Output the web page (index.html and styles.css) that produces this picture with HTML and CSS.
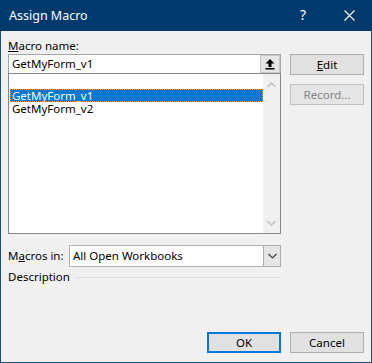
FILE: index.html
```html
<!DOCTYPE html>
<html>
<head>
<meta charset="utf-8">
<link rel="stylesheet" href="styles.css">
</head>
<body>
<div class="window">
  <div class="titlebar">
    <div class="title">Assign Macro</div>
    <div class="capbtn help">?</div>
    <div class="capbtn close">
      <svg width="11" height="11" viewBox="0 0 11 11"><path d="M0.5 0.5 L10.5 10.5 M10.5 0.5 L0.5 10.5" stroke="#fff" stroke-width="1.1" fill="none"/></svg>
    </div>
  </div>
  <div class="content">
    <div class="leftcol">
      <div class="label"><u>M</u>acro name:</div>
      <div class="namebox">
        <div class="nametext">GetMyForm_v1</div>
        <div class="upbtn">
          <svg width="10" height="11" viewBox="0 0 10 11"><path d="M5 0 L9.5 4.5 L6.5 4.5 L6.5 8 L3.5 8 L3.5 4.5 L0.5 4.5 Z" fill="#000"/><rect x="0.5" y="9" width="9" height="1.5" fill="#000"/></svg>
        </div>
      </div>
      <div class="list">
        <div class="items">
          <div class="item selected">GetMyForm_v1</div>
          <div class="item">GetMyForm_v2</div>
        </div>
        <div class="scrollbar">
          <svg width="9" height="6" viewBox="0 0 9 6"><path d="M0.5 5 L4.5 1 L8.5 5" stroke="#c2c2c2" stroke-width="1.6" fill="none"/></svg>
          <svg width="9" height="6" viewBox="0 0 9 6"><path d="M0.5 1 L4.5 5 L8.5 1" stroke="#c2c2c2" stroke-width="1.6" fill="none"/></svg>
        </div>
      </div>
      <div class="macrosin">
        <div class="label inl">M<u>a</u>cros in:</div>
        <div class="select">
          <div class="seltext">All Open Workbooks</div>
          <div class="selbtn">
            <svg width="9" height="6" viewBox="0 0 9 6"><path d="M0.5 1 L4.5 5 L8.5 1" stroke="#404040" stroke-width="1.2" fill="none"/></svg>
          </div>
        </div>
      </div>
      <div class="descrow">
        <div class="label inl">Description</div>
        <div class="rule"></div>
      </div>
    </div>
    <div class="rightcol">
      <div class="btn"><u>E</u>dit</div>
      <div class="btn disabled">Record...</div>
    </div>
  </div>
  <div class="footer">
    <div class="btn default">OK</div>
    <div class="btn">Cancel</div>
  </div>
</div>
</body>
</html>
```

FILE: styles.css
```css
* { box-sizing: border-box; }
html, body { margin: 0; padding: 0; }
body {
  font-family: "Noto Sans", "Open Sans", sans-serif;
  font-size: 11.5px;
  color: #000;
  background: #f0f0f0;
}
.window {
  width: 372px;
  height: 363px;
  background: #f0f0f0;
  border-left: 1px solid #1b4f7d;
  border-right: 1px solid #1b4f7d;
  border-bottom: 1px solid #1b4f7d;
  display: flex;
  flex-direction: column;
}
.titlebar {
  height: 31px;
  margin: 0 -1px;
  background: #003a6d;
  color: #fff;
  display: flex;
  align-items: center;
}
.title {
  flex: 1;
  padding-left: 9px;
  font-size: 12.5px;
  padding-bottom: 1px;
}
.capbtn {
  width: 46px;
  height: 31px;
  display: flex;
  align-items: center;
  justify-content: center;
}
.help { font-size: 14px; padding-bottom: 2px; }
.close svg { display: block; }
.content {
  display: flex;
  gap: 9px;
  padding: 7px 7px 0 7px;
}
.leftcol {
  width: 273px;
  display: flex;
  flex-direction: column;
}
.label {
  height: 16px;
  line-height: 16px;
}
.label.inl { height: auto; }
.namebox {
  height: 19px;
  border: 1px solid #a6a6a6;
  border-bottom: none;
  background: #fff;
  display: flex;
}
.nametext {
  flex: 1;
  padding-left: 3px;
  line-height: 18px;
}
.upbtn {
  width: 20px;
  height: 18px;
  background: #e5e5e5;
  border: 1px solid #c8c8c8;
  display: flex;
  align-items: center;
  justify-content: center;
}
.list {
  height: 161px;
  border: 1px solid #828790;
  background: #fff;
  display: flex;
}
.items {
  flex: 1;
  padding-top: 15px;
}
.item {
  height: 13px;
  line-height: 13px;
  padding-left: 2px;
  margin-left: 1px;
}
.item.selected {
  background: #0078d7;
  color: #fff;
  outline: 1px dotted #f0a050;
  outline-offset: -1px;
}
.scrollbar {
  width: 17px;
  background: #f0f0f0;
  display: flex;
  flex-direction: column;
  justify-content: space-between;
  align-items: center;
  padding: 8px 0 7px;
}
.macrosin {
  display: flex;
  align-items: center;
  margin-top: 11px;
}
.macrosin .label { width: 61px; }
.select {
  flex: 1;
  height: 22px;
  border: 1px solid #adadad;
  background: #fff;
  display: flex;
}
.seltext {
  flex: 1;
  padding-left: 3px;
  line-height: 19px;
}
.selbtn {
  width: 17px;
  background: #e5e5e5;
  border-left: 1px solid #adadad;
  display: flex;
  align-items: center;
  justify-content: center;
}
.descrow {
  display: flex;
  align-items: center;
  margin-top: 2px;
}
.rule {
  flex: 1;
  height: 1px;
  background: #dcdcdc;
  margin-left: 5px;
  margin-top: 1px;
}
.rightcol {
  width: 74px;
  margin-top: 16px;
  display: flex;
  flex-direction: column;
  gap: 9px;
}
.btn {
  height: 21px;
  width: 74px;
  border: 1px solid #adadad;
  background: #e1e1e1;
  display: flex;
  align-items: center;
  justify-content: center;
}
.btn.disabled { color: #838383; background: #e5e5e5; border-color: #bfbfbf; }
.footer {
  margin-top: auto;
  display: flex;
  justify-content: flex-end;
  gap: 9px;
  padding: 0 7px 9px 0;
}
.btn.default {
  border: 2px solid #0078d7;
  width: 74px;
}
```
